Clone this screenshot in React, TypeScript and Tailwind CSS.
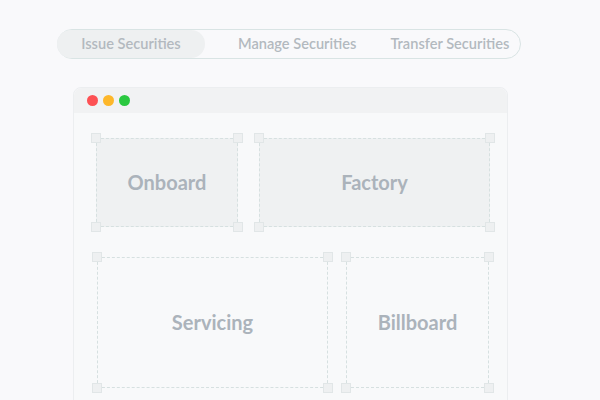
import React from "react";

type BoxProps = {
  label: string;
  width: number;
  height: number;
  filled?: boolean;
};

function Handle({ pos }: { pos: string }) {
  return (
    <div
      className={`absolute w-[10px] h-[10px] bg-[#eef0f1] border border-[#e1e6e7] ${pos}`}
    />
  );
}

function Box({ label, width, height, filled }: BoxProps) {
  return (
    <div
      style={{ width, height }}
      className={`relative flex items-center justify-center border border-dashed border-[#d6e0e0] ${
        filled ? "bg-[#eff1f2]" : ""
      }`}
    >
      <span className="text-[20px] font-bold text-[#abb3bb] mb-[2px]">{label}</span>
      <Handle pos="-left-[6px] -top-[6px]" />
      <Handle pos="-right-[6px] -top-[6px]" />
      <Handle pos="-left-[6px] -bottom-[6px]" />
      <Handle pos="-right-[6px] -bottom-[6px]" />
    </div>
  );
}

export default function App() {
  return (
    <div className="w-[600px] h-[400px] overflow-hidden bg-[#f9f9fb] font-['Lato',sans-serif]">
      {/* tabs */}
      <div className="pt-[29px] pl-[57px]">
        <div className="flex items-center w-[464px] h-[30px] rounded-full border border-[#d9e4e4] text-[14.6px] font-semibold text-[#b3b9bf]">
          <div className="flex items-center justify-center w-[148px] h-full rounded-full bg-[#eef0f1] -ml-px">
            Issue Securities
          </div>
          <div className="ml-[33px]">Manage Securities</div>
          <div className="ml-[34px]">Transfer Securities</div>
        </div>
      </div>

      {/* window */}
      <div className="mt-[28px] ml-[73px] w-[435px] h-[320px] rounded-t-lg border border-[#eceef0] bg-[#f8f9fa]">
        <div className="flex items-center gap-[5px] h-[25px] pl-[13px] rounded-t-lg bg-[#f1f2f3]">
          <span className="w-[11px] h-[11px] rounded-full bg-[#fd5154]" />
          <span className="w-[11px] h-[11px] rounded-full bg-[#fdb72a]" />
          <span className="w-[11px] h-[11px] rounded-full bg-[#2ac840]" />
        </div>
        <div className="pl-[22px] pt-[25px] flex flex-col gap-[30px]">
          <div className="flex gap-[21px]">
            <Box label="Onboard" width={142} height={89} filled />
            <Box label="Factory" width={231} height={89} filled />
          </div>
          <div className="flex gap-[18px] pl-px">
            <Box label="Servicing" width={231} height={131} />
            <Box label="Billboard" width={143} height={131} />
          </div>
        </div>
      </div>
    </div>
  );
}
